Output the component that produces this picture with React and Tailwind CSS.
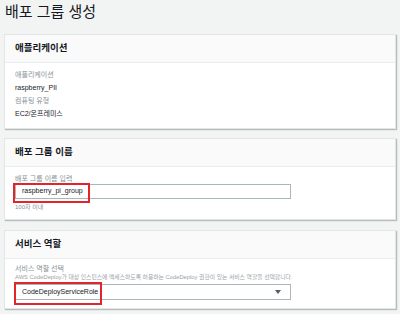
import React from 'react'

const font = { fontFamily: '"Liberation Sans", "Noto Sans CJK KR", sans-serif' }

const Card = ({ title, children, className = '' }) => (
  <div className={`bg-white border border-[#e3e6e6] shadow-[1px_1px_1px_rgba(0,28,36,0.25)] ${className}`}>
    <div className="h-[28px] bg-[#fafafa] border-b border-[#eaeded] flex items-center px-[10px]">
      <h2 className="text-[9.5px] font-bold text-[#16191f]">{title}</h2>
    </div>
    {children}
  </div>
)

const App = () => {
  return (
    <div className="w-[400px] h-[314px] bg-[#f2f3f3] overflow-hidden px-[4px]" style={font}>
      <h1 className="text-[15px] leading-[24px] text-[#16191f] pl-[1px] h-[34px]">배포 그룹 생성</h1>

      <Card title="애플리케이션">
        <div className="px-[10px] pt-[5px] pb-[8px] text-[7px] leading-[13px]">
          <div className="text-[#879196]">애플리케이션</div>
          <div className="text-[#16191f]">raspberry_PII</div>
          <div className="text-[#879196]">컴퓨팅 유형</div>
          <div className="text-[#16191f]">EC2/온프레미스</div>
        </div>
      </Card>

      <Card title="배포 그룹 이름" className="mt-[9px]">
        <div className="px-[10px] pt-[6px] pb-[6px]">
          <div className="text-[7px] leading-[11px] text-[#879196]">배포 그룹 이름 입력</div>
          <div className="relative w-[276px] h-[15px] border border-[#aab7b8] flex items-center px-[6px]">
            <span className="text-[7px] text-[#16191f]">raspberry_pi_group</span>
            <div className="absolute left-[-3px] top-[-2px] w-[77px] h-[20px] border-2 border-[#e3252b]" />
          </div>
          <div className="text-[6px] leading-[12px] mt-[2px] text-[#879196]">100자 이내</div>
        </div>
      </Card>

      <Card title="서비스 역할" className="mt-[10px]">
        <div className="px-[10px] pt-[5px] pb-[8px]">
          <div className="text-[7px] leading-[10px] text-[#879196]">서비스 역할 선택</div>
          <div className="text-[5.8px] leading-[7px] text-[#9aa3a8] whitespace-nowrap">AWS CodeDeploy가 대상 인스턴스에 액세스하도록 허용하는 CodeDeploy 권한이 있는 서비스 역할을 선택합니다.</div>
          <div className="relative w-[276px] h-[16px] mt-[3px] border border-[#aab7b8] flex items-center justify-between pl-[6px] pr-[9px]">
            <span className="text-[7px] text-[#16191f]">CodeDeployServiceRole</span>
            <svg width="6" height="4" viewBox="0 0 6 4"><path d="M0 0h6L3 4z" fill="#545b64" /></svg>
            <div className="absolute left-[-2px] top-[-3px] w-[88px] h-[23px] border-2 border-[#e3252b]" />
          </div>
        </div>
      </Card>
    </div>
  )
}

export default App
